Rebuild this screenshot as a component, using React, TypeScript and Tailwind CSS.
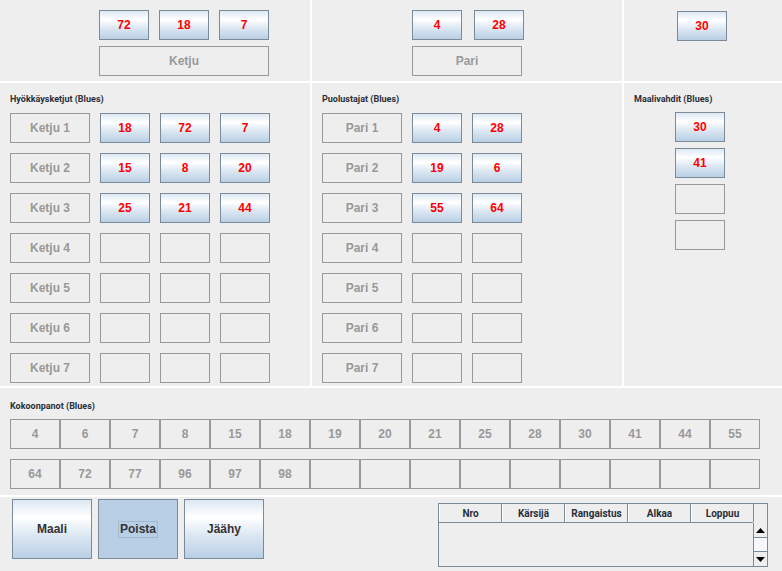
import React from 'react';

const grad =
  'bg-[linear-gradient(to_bottom,#dde8f3_0%,#ffffff_30%,#dde8f3_60%,#b8cfe5_100%)] border border-[#7a8a99]';

const NumButton: React.FC<{ n?: string; w?: string }> = ({ n, w = 'w-[50px]' }) => {
  if (!n) {
    return <div className={`${w} h-[30px] border border-[#999999] shrink-0`} />;
  }
  return (
    <div
      className={`${w} h-[30px] ${grad} shrink-0 flex items-center justify-center text-[12px] font-bold text-[#ff0000]`}
    >
      {n}
    </div>
  );
};

const GreyBox: React.FC<{ label?: string; w?: string }> = ({ label, w = 'w-[80px]' }) => (
  <div
    className={`${w} h-[30px] border border-[#999999] shrink-0 flex items-center justify-center text-[12px] font-bold text-[#999999]`}
  >
    {label}
  </div>
);

const Heading: React.FC<{ children: React.ReactNode }> = ({ children }) => (
  <div className="h-[12px] leading-[12px] text-[9px] font-bold text-[#2a2f3a] font-['Roboto',sans-serif]">
    {children}
  </div>
);

const forwards: string[][] = [
  ['18', '72', '7'],
  ['15', '8', '20'],
  ['25', '21', '44'],
  ['', '', ''],
  ['', '', ''],
  ['', '', ''],
  ['', '', ''],
];

const defense: string[][] = [
  ['4', '28'],
  ['19', '6'],
  ['55', '64'],
  ['', ''],
  ['', ''],
  ['', ''],
  ['', ''],
];

const goalies = ['30', '41', '', ''];

const roster1 = ['4', '6', '7', '8', '15', '18', '19', '20', '21', '25', '28', '30', '41', '44', '55'];
const roster2 = ['64', '72', '77', '96', '97', '98', '', '', '', '', '', '', '', '', ''];

const columns = ['Nro', 'Kärsijä', 'Rangaistus', 'Alkaa', 'Loppuu'];

export default function App() {
  return (
    <div className="w-[782px] h-[571px] bg-[#eeeeee] flex flex-col overflow-hidden font-['Liberation_Sans',Arial,sans-serif]">
      {/* top row */}
      <div className="h-[81px] flex shrink-0">
        <div className="w-[310px] pl-[99px] pt-[10px] flex flex-col gap-[6px]">
          <div className="flex gap-[10px]">
            <NumButton n="72" />
            <NumButton n="18" />
            <NumButton n="7" />
          </div>
          <GreyBox label="Ketju" w="w-[170px]" />
        </div>
        <div className="w-[2px] bg-white" />
        <div className="w-[310px] pl-[100px] pt-[10px] flex flex-col gap-[6px]">
          <div className="flex gap-[12px]">
            <NumButton n="4" />
            <NumButton n="28" />
          </div>
          <GreyBox label="Pari" w="w-[110px]" />
        </div>
        <div className="w-[2px] bg-white" />
        <div className="flex-1 pl-[53px] pt-[11px]">
          <NumButton n="30" />
        </div>
      </div>
      <div className="h-[2px] bg-white shrink-0" />

      {/* lines */}
      <div className="h-[303px] flex shrink-0">
        <div className="w-[310px] pl-[10px] pt-[10px] flex flex-col gap-[8px]">
          <Heading>Hyökkäysketjut (Blues)</Heading>
          <div className="flex flex-col gap-[10px]">
            {forwards.map((row, i) => (
              <div key={i} className="flex gap-[10px]">
                <GreyBox label={`Ketju ${i + 1}`} />
                {row.map((n, j) => (
                  <NumButton key={j} n={n} />
                ))}
              </div>
            ))}
          </div>
        </div>
        <div className="w-[2px] bg-white" />
        <div className="w-[310px] pl-[10px] pt-[10px] flex flex-col gap-[8px]">
          <Heading>Puolustajat (Blues)</Heading>
          <div className="flex flex-col gap-[10px]">
            {defense.map((row, i) => (
              <div key={i} className="flex gap-[10px]">
                <GreyBox label={`Pari ${i + 1}`} />
                {row.map((n, j) => (
                  <NumButton key={j} n={n} />
                ))}
              </div>
            ))}
          </div>
        </div>
        <div className="w-[2px] bg-white" />
        <div className="flex-1 pl-[10px] pt-[10px] flex flex-col gap-[7px]">
          <Heading>Maalivahdit (Blues)</Heading>
          <div className="pl-[41px] flex flex-col gap-[6px]">
            {goalies.map((n, i) => (
              <NumButton key={i} n={n} />
            ))}
          </div>
        </div>
      </div>
      <div className="h-[2px] bg-white shrink-0" />

      {/* roster */}
      <div className="h-[107px] pl-[10px] pt-[12px] flex flex-col gap-[7px] shrink-0">
        <Heading>Kokoonpanot (Blues)</Heading>
        <div className="flex flex-col gap-[10px]">
          {[roster1, roster2].map((row, i) => (
            <div key={i} className="flex">
              {row.map((n, j) => (
                <GreyBox key={j} label={n} w="w-[50px]" />
              ))}
            </div>
          ))}
        </div>
      </div>
      <div className="h-[2px] bg-white shrink-0" />

      {/* bottom */}
      <div className="flex-1 flex pl-[12px] pt-[2px]">
        <div className="flex gap-[6px]">
          <div className={`w-[80px] h-[60px] ${grad} flex items-center justify-center text-[12px] font-bold text-[#333333]`}>
            Maali
          </div>
          <div className="w-[80px] h-[60px] bg-[#b8cfe5] border border-[#7a8a99] flex items-center justify-center">
            <span className="px-[1px] border border-[#a3b8cc] text-[12px] leading-[15px] font-bold text-[#333333]">
              Poista
            </span>
          </div>
          <div className={`w-[80px] h-[60px] ${grad} flex items-center justify-center text-[12px] font-bold text-[#333333]`}>
            Jäähy
          </div>
        </div>
        <div className="ml-[174px] mt-[4px] w-[330px] h-[64px] border border-[#7a8a99] flex">
          <div className="w-[314px] flex flex-col">
            <div className="h-[19px] flex border-b border-[#7a8a99] shrink-0">
              {columns.map((c) => (
                <div
                  key={c}
                  className="w-[63px] shrink-0 border-l border-l-white border-r border-r-[#7a8a99] bg-[#eeeeee] flex items-center justify-center text-[10px] font-bold text-[#2a2f3a] font-['Roboto',sans-serif]"
                >
                  {c}
                </div>
              ))}
            </div>
            <div className="flex-1" />
          </div>
          <div className="flex-1 flex flex-col">
            <div className="h-[19px] shrink-0" />
            <div className="flex-1 flex flex-col border-l border-[#7a8a99]">
              <div className="h-[15px] border-b border-[#7a8a99] flex items-center justify-center">
                <svg width="9" height="5" viewBox="0 0 9 5">
                  <path d="M0 5 L4.5 0 L9 5 Z" fill="#000" />
                </svg>
              </div>
              <div className="flex-1 bg-[#f6f8fb] border-b border-[#7a8a99]" />
              <div className="h-[14px] flex items-center justify-center">
                <svg width="9" height="5" viewBox="0 0 9 5">
                  <path d="M0 0 L9 0 L4.5 5 Z" fill="#000" />
                </svg>
              </div>
            </div>
          </div>
        </div>
      </div>
    </div>
  );
}
